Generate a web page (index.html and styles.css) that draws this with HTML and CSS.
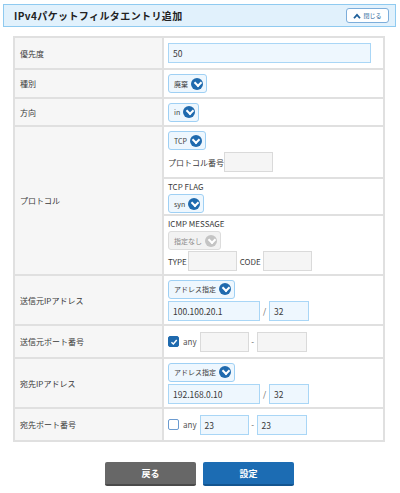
FILE: index.html
```html
<!DOCTYPE html>
<html lang="ja">
<head>
<meta charset="utf-8">
<link rel="stylesheet" href="styles.css">
</head>
<body>
<div class="page">
  <div class="header">
    <h1 class="title">IPv4パケットフィルタエントリ追加</h1>
    <button class="close-btn" type="button">
      <svg class="close-icon" viewBox="0 0 10 8" width="8" height="6"><path d="M1 7 L5 2.5 L9 7" fill="none" stroke="#1d5f9a" stroke-width="2.4"/></svg>
      <span>閉じる</span>
    </button>
  </div>

  <table class="form">
    <tr class="h32">
      <th>優先度</th>
      <td><span class="input w-prio filled">50</span></td>
    </tr>
    <tr class="h29">
      <th>種別</th>
      <td><span class="select"><span class="sel-text">廃棄</span><span class="chev"></span></span></td>
    </tr>
    <tr class="h28">
      <th>方向</th>
      <td><span class="select"><span class="sel-text">in</span><span class="chev"></span></span></td>
    </tr>
    <tr>
      <th>プロトコル</th>
      <td class="nested">
        <div class="sub sub1">
          <span class="select"><span class="sel-text">TCP</span><span class="chev"></span></span>
          <div class="line">
            <span class="txt">プロトコル番号</span>
            <span class="input w49 empty"></span>
          </div>
        </div>
        <div class="sub sub2">
          <div class="caption">TCP FLAG</div>
          <span class="select"><span class="sel-text">syn</span><span class="chev"></span></span>
        </div>
        <div class="sub sub3">
          <div class="caption">ICMP MESSAGE</div>
          <span class="select disabled"><span class="sel-text">指定なし</span><span class="chev"></span></span>
          <div class="line">
            <span class="txt">TYPE</span>
            <span class="input w49 empty ml1"></span>
            <span class="txt ml3">CODE</span>
            <span class="input w49 empty ml2"></span>
          </div>
        </div>
      </td>
    </tr>
    <tr class="h50">
      <th>送信元IPアドレス</th>
      <td>
        <span class="select"><span class="sel-text">アドレス指定</span><span class="chev"></span></span>
        <div class="line ip-line">
          <span class="input w91 filled">100.100.20.1</span>
          <span class="slash">/</span>
          <span class="input w40 filled">32</span>
        </div>
      </td>
    </tr>
    <tr class="h33">
      <th>送信元ポート番号</th>
      <td>
        <div class="line">
          <span class="check checked"><svg viewBox="0 0 10 10" width="8" height="8"><path d="M1.8 5.2 L4.2 7.4 L8.4 2.6" fill="none" stroke="#fff" stroke-width="1.8"/></svg></span>
          <span class="txt any">any</span>
          <span class="input w49 empty"></span>
          <span class="dash">-</span>
          <span class="input w50 empty"></span>
        </div>
      </td>
    </tr>
    <tr class="h50">
      <th>宛先IPアドレス</th>
      <td>
        <span class="select"><span class="sel-text">アドレス指定</span><span class="chev"></span></span>
        <div class="line ip-line">
          <span class="input w91 filled">192.168.0.10</span>
          <span class="slash">/</span>
          <span class="input w40 filled">32</span>
        </div>
      </td>
    </tr>
    <tr class="h33">
      <th>宛先ポート番号</th>
      <td>
        <div class="line">
          <span class="check"></span>
          <span class="txt any">any</span>
          <span class="input w49 filled">23</span>
          <span class="dash">-</span>
          <span class="input w50 filled">23</span>
        </div>
      </td>
    </tr>
  </table>

  <div class="actions">
    <button class="btn btn-back" type="button">戻る</button>
    <button class="btn btn-submit" type="button">設定</button>
  </div>
</div>
</body>
</html>
```
FILE: styles.css
```css
* { box-sizing: border-box; }
html, body { margin: 0; padding: 0; background: #fff; }
body {
  font-family: "Noto Sans CJK JP", "Noto Sans", sans-serif;
  color: #3a3a3a;
  font-size: 8px;
}
.page { padding: 4px 4px 0 3px; }

.header {
  height: 23px;
  background: #e1f1fc;
  border: 1px solid #8fcaf0;
  display: flex;
  align-items: center;
  justify-content: space-between;
  padding: 0 6px 0 10px;
}
.title {
  margin: 0;
  font-size: 10px;
  font-weight: bold;
  color: #222;
  letter-spacing: 0.4px;
}
.close-btn {
  height: 15px;
  width: 43px;
  background: #fff;
  border: 1px solid #7daedb;
  border-radius: 3px;
  display: flex;
  align-items: center;
  justify-content: center;
  gap: 2px;
  padding: 0;
  font-family: inherit;
  font-size: 6px;
  color: #1d5f9a;
}
.close-icon { display: block; }

.form {
  margin: 9px 0 0 10px;
  width: 372px;
  border-collapse: collapse;
  border: 2px solid #e0e0e0;
}
.form th, .form td {
  border: 2px solid #e0e0e0;
  vertical-align: middle;
}
.form th {
  width: 149px;
  background: #f6f6f6;
  text-align: left;
  font-weight: normal;
  padding: 0 5px;
  font-size: 8px;
  color: #3a3a3a;
}
.form td { padding: 0 4px; }
.h32 { height: 32px; }
.h29 { height: 29px; }
.h28 { height: 28px; }
.h50 { height: 50px; }
.h33 { height: 33px; }

.form td.nested { padding: 0; }
.sub { padding: 0 4px; display: flex; flex-direction: column; align-items: flex-start; }
.sub + .sub { border-top: 2px solid #e0e0e0; }
.sub1 { height: 50px; padding-top: 4px; gap: 2px; }
.sub2 { height: 37px; padding-top: 2px; gap: 1px; }
.sub3 { height: 60px; padding-top: 2px; gap: 1px; }
.caption { font-size: 8px; line-height: 12px; color: #3a3a3a; }

.line { display: flex; align-items: center; }
.ip-line { margin-top: 2px; }
.txt { font-size: 8px; color: #3a3a3a; white-space: nowrap; }

.select {
  display: inline-flex;
  align-items: center;
  height: 19px;
  padding: 0 3px 0 5px;
  gap: 3px;
  background: #eef7fe;
  border: 1px solid #9fd0f4;
  border-radius: 3px;
  font-size: 7px;
  color: #3a3a3a;
  vertical-align: middle;
}
.chev {
  width: 12px;
  height: 12px;
  border-radius: 50%;
  background: #1f6aae;
  position: relative;
  flex: none;
}
.chev::after {
  content: "";
  position: absolute;
  left: 3.5px;
  top: 2.2px;
  width: 4px;
  height: 4px;
  border-right: 2px solid #fff;
  border-bottom: 2px solid #fff;
  transform: rotate(45deg);
}
.select.disabled {
  background: #f2f2f2;
  border-color: #dcdcdc;
  color: #888;
}
.select.disabled .chev { background: #c4c4c4; }

.input {
  display: inline-flex;
  align-items: center;
  height: 20px;
  padding: 0 4px;
  font-size: 8.5px;
  color: #3a3a3a;
}
.input.filled { background: #eef7fe; border: 1px solid #a9d6f6; }
.input.empty { background: #f5f5f5; border: 1px solid #dadada; }
.w-prio { width: 203px; }
.w91 { width: 92px; }
.w40 { width: 40px; }
.w49 { width: 49px; }
.w50 { width: 50px; }
.ml1 { margin-left: 1px; }
.ml2 { margin-left: 2px; }
.ml3 { margin-left: 3px; }
.slash { width: 9px; text-align: center; font-size: 8px; color: #555; }
.dash { width: 8px; text-align: center; font-size: 8px; color: #555; }
.any { margin: 0 3px 0 4px; color: #555; }

.check {
  width: 11px;
  height: 11px;
  border-radius: 2px;
  border: 1px solid #6b9bd0;
  background: #fff;
  display: inline-flex;
  align-items: center;
  justify-content: center;
  flex: none;
}
.check.checked { background: #1f6aae; border-color: #1f6aae; }
.check svg { display: block; }

.actions {
  display: flex;
  justify-content: center;
  gap: 7px;
  margin-top: 20px;
  padding-left: 0;
}
.btn {
  width: 91px;
  height: 24px;
  border: none;
  border-radius: 2px;
  color: #fff;
  font-family: inherit;
  font-weight: bold;
  font-size: 9px;
  padding: 0;
}
.btn-back { background: #676767; border-bottom: 2px solid #4a4a4a; }
.btn-submit { background: #1c6cb3; border-bottom: 2px solid #135590; }
```
